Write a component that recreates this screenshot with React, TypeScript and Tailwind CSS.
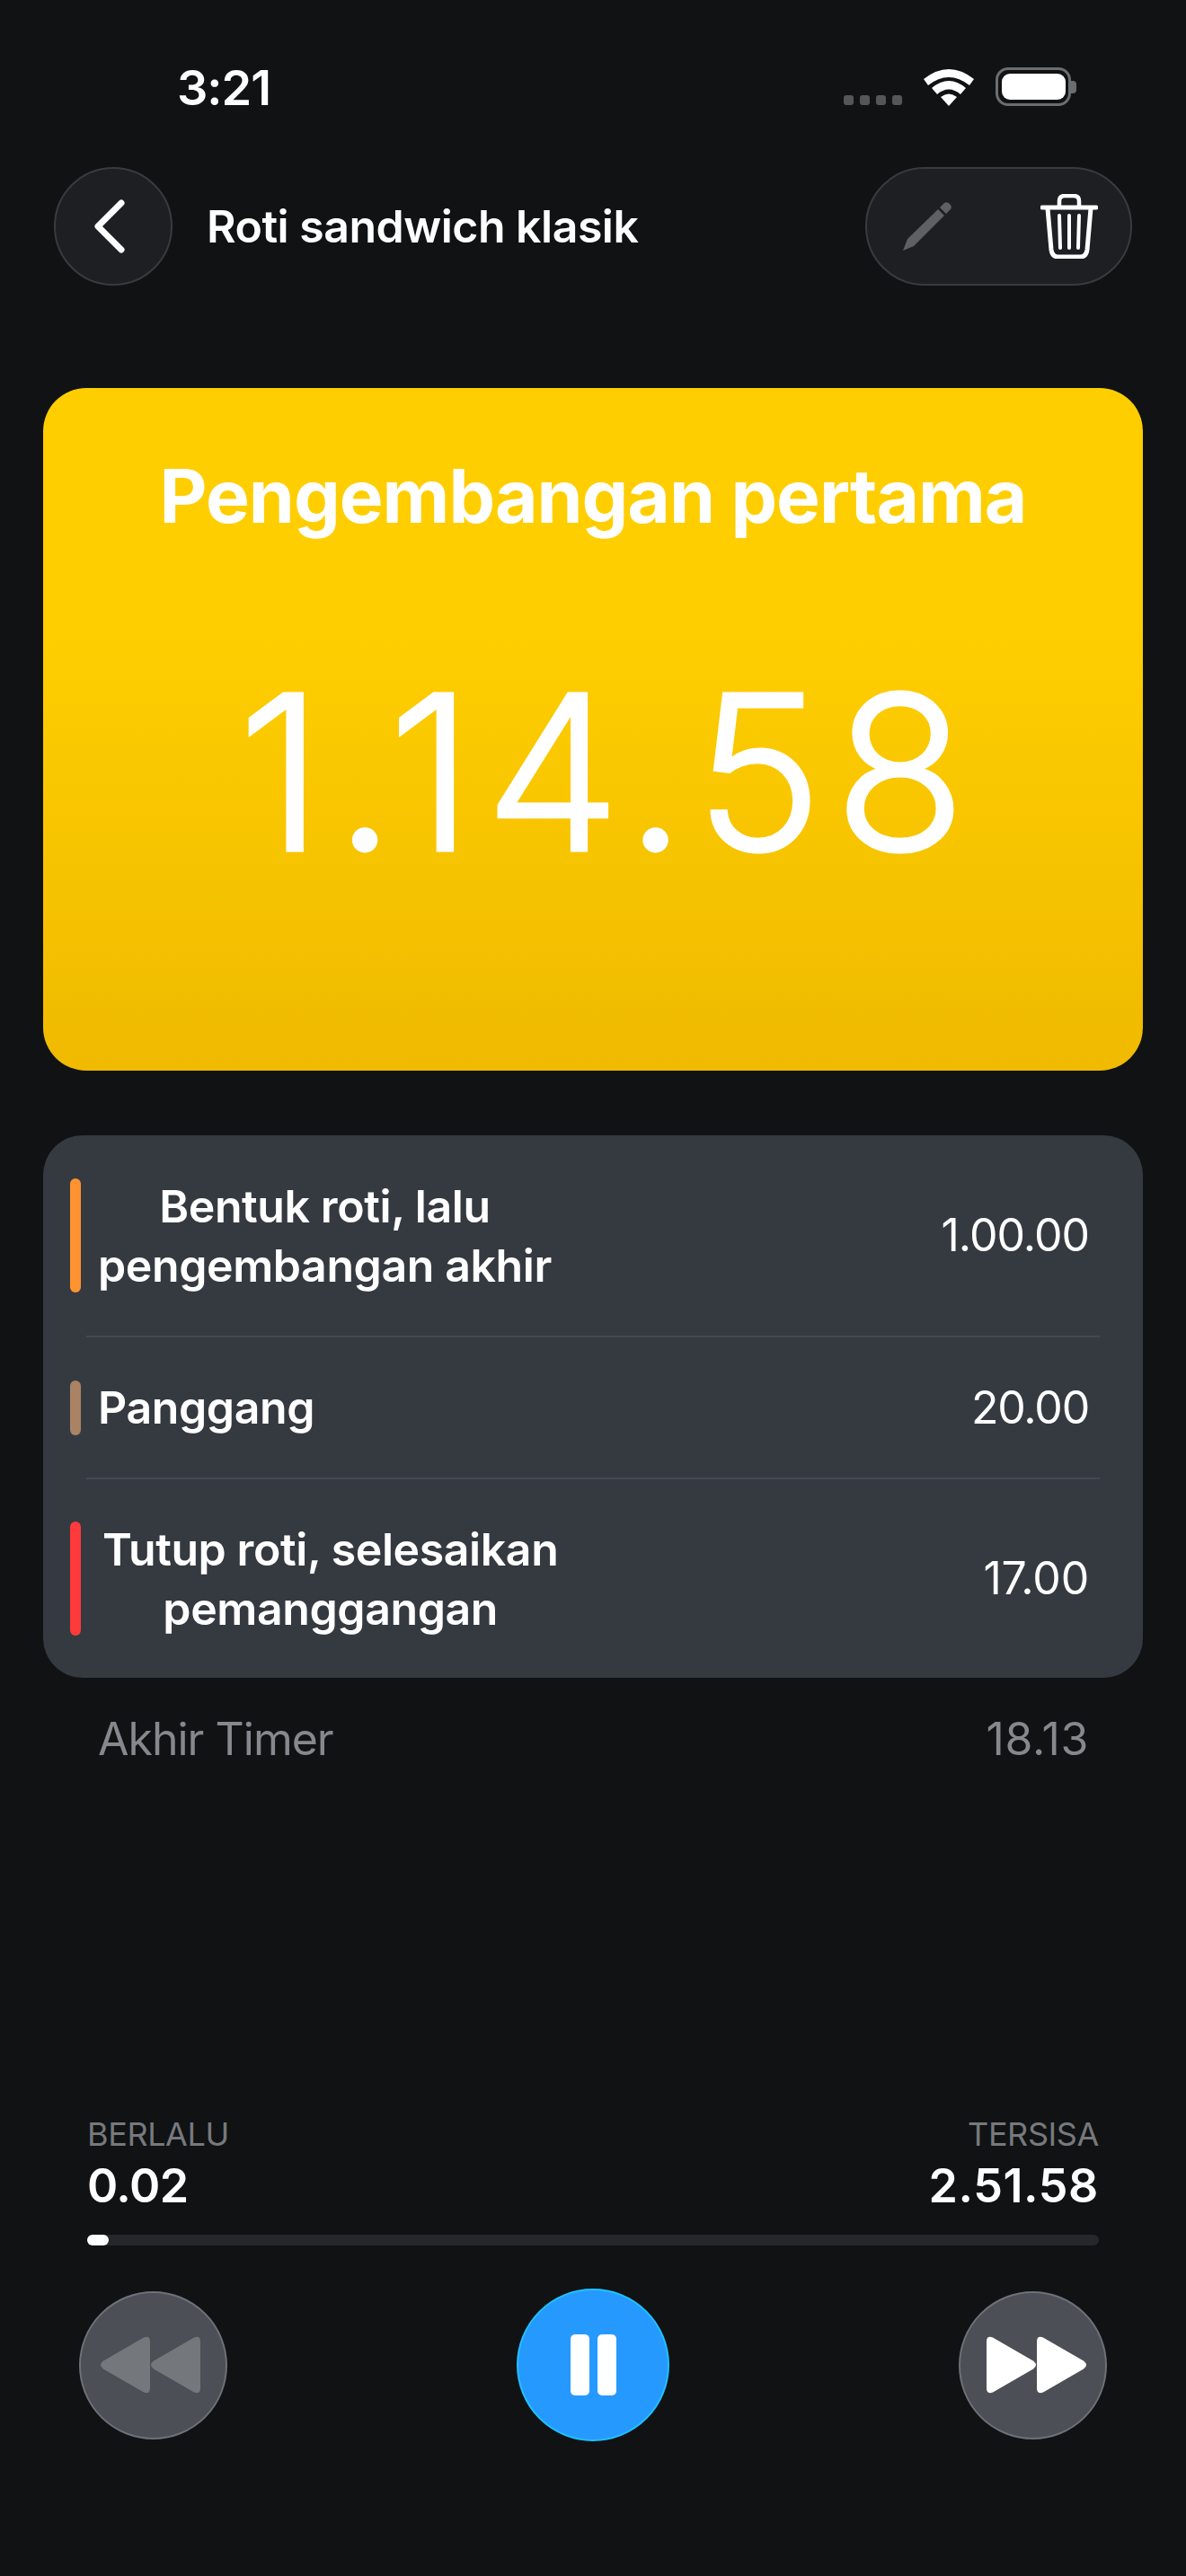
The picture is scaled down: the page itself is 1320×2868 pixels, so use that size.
const rows = [
  { color: 'bg-[#ff9330]', bar: 'h-[127px]', lines: ['Bentuk roti, lalu', 'pengembangan akhir'], time: '1.00.00', height: 'h-[223px]', shift: 'ml-[19px]', spacing: 'tracking-[-1px]' },
  { color: 'bg-[#a98363]', bar: 'h-[61px]', lines: ['Panggang'], time: '20.00', height: 'h-[156px]', shift: 'ml-[19px]', spacing: 'tracking-[-1.2px]' },
  { color: 'bg-[#ff3a3a]', bar: 'h-[127px]', lines: ['Tutup roti, selesaikan', 'pemanggangan'], time: '17.00', height: 'h-[221px]', shift: 'ml-[24px]', spacing: 'tracking-[-0.2px]' },
];

function Triangles({ fill, flip }: { fill: string; flip?: boolean }) {
  return (
    <svg width="120" height="64" viewBox="0 0 120 64" className={flip ? 'rotate-180' : ''}>
      <path d="M4 27.5 L49 1.5 Q56 -1 56 6 V58 Q56 65 49 62.5 L4 36.5 Q-2 32 4 27.5 Z" fill={fill} />
      <path d="M60 27.5 L105 1.5 Q112 -1 112 6 V58 Q112 65 105 62.5 L60 36.5 Q54 32 60 27.5 Z" fill={fill} />
    </svg>
  );
}

export default function App() {
  return (
    <div className="flex flex-col w-[1320px] h-[2868px] overflow-hidden bg-[#101214] text-white font-['Inter',sans-serif]">
      {/* Status bar */}
      <div className="flex justify-between h-[186px] pl-[197px] pr-[122px] pt-[66px]">
        <span className="text-[54px] leading-[63px] font-semibold tracking-[-1px]">3:21</span>
        <div className="flex items-start pt-[9px]">
          <div className="flex gap-[7px] mt-[31px] mr-[23px]">
            <span className="w-[11px] h-[11px] rounded-[3px] bg-[#555658]" />
            <span className="w-[11px] h-[11px] rounded-[3px] bg-[#555658]" />
            <span className="w-[11px] h-[11px] rounded-[3px] bg-[#555658]" />
            <span className="w-[11px] h-[11px] rounded-[3px] bg-[#555658]" />
          </div>
          <svg width="58" height="43" viewBox="0 0 58 43" className="mr-[23px]">
            <path d="M1 13 Q29 -9 57 13 L52 20 Q29 2 6 20 Z" fill="#fff" />
            <path d="M10 23 Q29 7 48 23 L42 30 Q29 19 16 30 Z" fill="#fff" />
            <path d="M20 33 Q29 26 38 33 L29 43 Z" fill="#fff" />
          </svg>
          <div className="flex items-center">
            <div className="flex items-center justify-center w-[84px] h-[43px] rounded-[14px] border-[3px] border-[#6c6d6f]">
              <div className="w-[71px] h-[29px] rounded-[9px] bg-white" />
            </div>
            <div className="w-[6px] h-[14px] rounded-r-[4px] bg-[#6c6d6f]" />
          </div>
        </div>
      </div>

      {/* Nav */}
      <div className="flex items-center justify-between h-[132px] pl-[60px] pr-[60px]">
        <div className="flex items-center">
          <button className="flex items-center justify-center w-[132px] h-[132px] rounded-full bg-[#1d1f23] border-2 border-[#383b3f]">
            <svg width="36" height="60" viewBox="0 0 36 60" fill="none" stroke="#fff" strokeWidth="7" strokeLinecap="round" strokeLinejoin="round" className="mr-[8px]">
              <path d="M31 4 L5 30 L31 56" />
            </svg>
          </button>
          <span className="ml-[38px] text-[50px] font-semibold tracking-[-0.5px]">Roti sandwich klasik</span>
        </div>
        <div className="flex items-center justify-between w-[297px] h-[132px] pl-[40px] pr-[36px] rounded-full bg-[#1d1f23] border-2 border-[#383b3f]">
          <svg width="54" height="54" viewBox="0 0 54 54">
            <path d="M0 54 L5 41 L39 8 L46 15 L12 49 Z" fill="#5f6062" />
            <path d="M41 6 L46 1 Q49 -1 52 2 Q55 5 53 8 L48 13 Z" fill="#5f6062" />
          </svg>
          <svg width="64" height="72" viewBox="0 0 64 72" fill="none" stroke="#fff" strokeLinecap="round">
            <path d="M2 15 H62" strokeWidth="5" />
            <path d="M21 13 V8 Q21 2 27 2 H37 Q43 2 43 8 V13" strokeWidth="4.5" />
            <path d="M8 16 L12 62 Q13 70 20 70 H44 Q51 70 52 62 L56 16" strokeWidth="5" />
            <path d="M21 24 L22 60 M32 24 V60 M43 24 L42 60" strokeWidth="4" />
          </svg>
        </div>
      </div>

      {/* Current step */}
      <div className="flex flex-col items-center w-[1224px] h-[760px] mt-[114px] mx-[48px] rounded-[48px] bg-[linear-gradient(180deg,#ffce00_0%,#ffce00_35%,#efba00_100%)]">
        <h1 className="mt-[71px] text-[82px] leading-[100px] font-bold tracking-[-1px]">Pengembangan pertama</h1>
        <div className="mt-[112px] ml-[33px] text-[240px] leading-[290px] font-light tracking-[13px] [-webkit-text-stroke:3px_white]">1.14.58</div>
      </div>

      {/* Steps */}
      <div className="flex flex-col w-[1224px] mt-[72px] mx-[48px] rounded-[44px] bg-[#353a41]">
        {rows.map((row, i) => (
          <div key={row.time}>
            {i > 0 && <div className="h-[2px] ml-[48px] mr-[48px] bg-[#444951]" />}
            <div className={`flex items-center justify-between pl-[30px] pr-[60px] ${row.height}`}>
              <div className="flex items-center">
                <div className={`w-[12px] rounded-full ${row.color} ${row.bar}`} />
                <div className={`w-fit text-center text-[50px] leading-[66px] font-semibold tracking-[-0.4px] ${row.shift}`}>
                  {row.lines.map((line) => (
                    <div key={line}>{line}</div>
                  ))}
                </div>
              </div>
              <span className={`text-[50px] ${row.spacing}`}>{row.time}</span>
            </div>
          </div>
        ))}
      </div>

      <div className="flex items-center justify-between h-[68px] mt-[34px] pl-[109px] pr-[108px] text-[50px] text-[#85888c]">
        <span className="tracking-[-1px]">Akhir Timer</span>
        <span className="tracking-[0.6px]">18.13</span>
      </div>

      {/* Player */}
      <div className="flex flex-col mt-auto pb-[150px]">
        <div className="flex justify-between px-[97px]">
          <div>
            <div className="mt-[2px] text-[36px] leading-[44px] text-[#77797c] tracking-[-0.4px]">BERLALU</div>
            <div className="mt-[6px] text-[52px] leading-[60px] font-semibold tracking-[-0.5px]">0.02</div>
          </div>
          <div className="text-right">
            <div className="mt-[2px] text-[36px] leading-[44px] text-[#77797c] tracking-[-0.4px]">TERSISA</div>
            <div className="mt-[6px] text-[52px] leading-[60px] font-semibold tracking-[0.6px]">2.51.58</div>
          </div>
        </div>
        <div className="h-[12px] mt-[24px] mx-[97px] rounded-full bg-[#25272b]">
          <div className="w-[24px] h-[12px] rounded-full bg-white" />
        </div>
        <div className="flex items-center justify-between mt-[48px] pl-[88px] pr-[88px]">
          <button className="flex items-center justify-center w-[165px] h-[165px] rounded-full bg-[#4c4f55] border-2 border-[#6d7178]">
            <Triangles fill="#74787d" />
          </button>
          <button className="flex items-center justify-center w-[170px] h-[170px] rounded-full bg-[#2699ff] border-2 border-[#1fc2ff]">
            <div className="flex gap-[9px]">
              <div className="w-[21px] h-[68px] rounded-[5px] bg-white" />
              <div className="w-[21px] h-[68px] rounded-[5px] bg-white" />
            </div>
          </button>
          <button className="flex items-center justify-center w-[165px] h-[165px] rounded-full bg-[#4c4f55] border-2 border-[#6d7178]">
            <Triangles fill="#fff" flip />
          </button>
        </div>
      </div>
    </div>
  );
}
